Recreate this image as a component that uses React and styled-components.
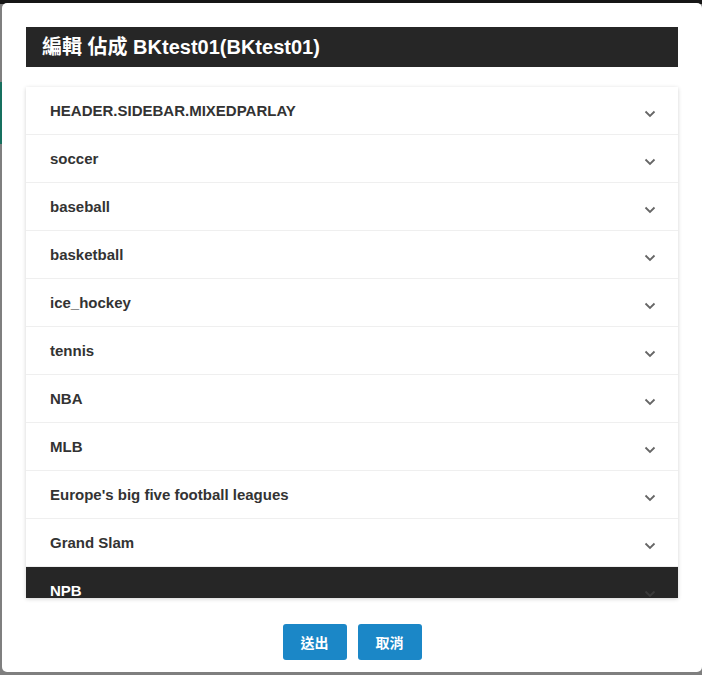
import React from "react";
import styled, { createGlobalStyle } from "styled-components";

const GlobalStyle = createGlobalStyle`
  html, body {
    margin: 0;
    padding: 0;
    background: #7f7f7f;
    font-family: "Liberation Sans", "Noto Sans CJK TC", Arial, sans-serif;
  }
`;

const sports = [
  "HEADER.SIDEBAR.MIXEDPARLAY",
  "soccer",
  "baseball",
  "basketball",
  "ice_hockey",
  "tennis",
  "NBA",
  "MLB",
  "Europe's big five football leagues",
  "Grand Slam",
  "NPB",
  "KBO",
];

const Backdrop = styled.div`
  position: relative;
  width: 702px;
  height: 675px;
  overflow: hidden;
  background: #7f7f7f;
`;

const TopBar = styled.div`
  height: 4px;
  background: #161616;
`;

const SideItem = styled.div`
  position: absolute;
  left: 0;
  top: 82px;
  width: 4px;
  height: 62px;
  background: #17705f;
`;

const Modal = styled.div`
  position: absolute;
  left: 2px;
  top: 3px;
  width: 700px;
  height: 669px;
  box-sizing: border-box;
  background: #fff;
  border-radius: 5px;
  padding: 24px 24px 12px;
  display: flex;
  flex-direction: column;
`;

const Title = styled.h4`
  margin: 0;
  height: 40px;
  background: #262626;
  color: #fff;
  font-size: 20px;
  font-weight: bold;
  line-height: 40px;
  padding-left: 16px;
`;

const List = styled.div`
  margin-top: 20px;
  height: 511px;
  overflow: hidden;
  box-shadow: 0 1px 4px rgba(0, 0, 0, 0.18);
`;

const Row = styled.div`
  height: 47px;
  border-bottom: 1px solid #efefef;
  display: flex;
  align-items: center;
  justify-content: space-between;
  padding: 0 22px 0 24px;
  background: ${(p) => (p.$active ? "#262626" : "#fff")};
  color: ${(p) => (p.$active ? "#fff" : "#333")};
  font-size: 15px;
  font-weight: bold;
`;

const Chevron = styled.svg`
  width: 12px;
  height: 8px;
  margin-top: 6px;
  color: ${(p) => (p.$active ? "#3a3a3a" : "#666")};
`;

const Footer = styled.div`
  margin-top: 26px;
  display: flex;
  justify-content: center;
  gap: 11px;
`;

const Button = styled.button`
  width: 64px;
  height: 36px;
  border: none;
  border-radius: 3px;
  background: #1b87c7;
  color: #fff;
  font-family: "Noto Sans CJK TC", sans-serif;
  font-size: 14px;
  font-weight: bold;
  padding: 0;
`;

const ChevronDown = ({ active }) => (
  <Chevron $active={active} viewBox="0 0 12 8" fill="none">
    <path d="M1.5 1.5 L6 6 L10.5 1.5" stroke="currentColor" strokeWidth="1.8" />
  </Chevron>
);

const App = () => (
  <Backdrop>
    <GlobalStyle />
    <TopBar />
    <SideItem />
    <Modal>
      <Title>編輯 佔成 BKtest01(BKtest01)</Title>
      <List>
        {sports.map((s) => {
          const active = s === "NPB";
          return (
            <Row key={s} $active={active}>
              <span>{s}</span>
              <ChevronDown active={active} />
            </Row>
          );
        })}
      </List>
      <Footer>
        <Button>送出</Button>
        <Button>取消</Button>
      </Footer>
    </Modal>
  </Backdrop>
);

export default App;
